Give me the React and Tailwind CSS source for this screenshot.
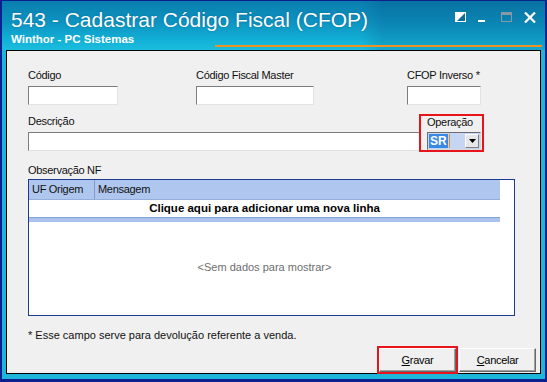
import React from "react";

// sunken win32 edit box
const editBox =
  "h-[19px] bg-white border border-t-[#7d7d7d] border-l-[#7d7d7d] border-r-[#e3e3e3] border-b-[#e3e3e3]";

const Label = ({ children, className = "" }) => (
  <div className={`text-[11px] leading-[14px] tracking-[-0.3px] text-[#111] whitespace-nowrap ${className}`}>{children}</div>
);

const TitleIcons = () => (
  <div className="flex items-start mt-[4px]">
    <div className="w-[23px]">
      <svg width="11" height="10" viewBox="0 0 11 10">
        <rect x="0.5" y="0.5" width="10" height="9" fill="#fff" stroke="#fff" />
        <polygon points="10,1 10,9 2,9" fill="#0b6d97" />
      </svg>
    </div>
    <div className="w-[23px]">
      <svg width="8" height="11" viewBox="0 0 8 11">
        <rect x="0" y="8" width="7" height="2" fill="#fff" />
      </svg>
    </div>
    <div className="w-[23px]">
      <svg width="12" height="10" viewBox="0 0 12 10">
        <rect x="0.5" y="0.5" width="10" height="9" fill="none" stroke="#8a98a4" />
        <rect x="0" y="0" width="11" height="3" fill="#8a98a4" />
      </svg>
    </div>
    <div className="w-[12px]">
      <svg width="12" height="11" viewBox="0 0 12 11">
        <path d="M1 0.5 L11 10.5 M11 0.5 L1 10.5" stroke="#fff" strokeWidth="2.2" />
      </svg>
    </div>
  </div>
);

const Button = ({ children, className = "" }) => (
  <div
    className={`w-[77px] h-[24px] flex items-center justify-center text-[11px] tracking-[-0.3px] text-black bg-[#f0f0f0] border border-t-white border-l-white border-r-[#696969] border-b-[#696969] shadow-[inset_-1px_-1px_0_#a0a0a0] ${className}`}
  >
    {children}
  </div>
);

export default function App() {
  return (
    <div className="w-[547px] h-[382px] bg-[#0c2090] pt-[1px] px-[2px] pb-[3px] font-['Liberation_Sans',Arial,sans-serif]">
      <div className="h-full flex flex-col bg-[#1db6d8]">
        {/* title bar */}
        <div className="pl-[9px] pr-[9px] pt-[7px] pb-[4px] bg-[linear-gradient(90deg,transparent_66%,rgba(0,50,100,0.16)_70%,rgba(0,50,100,0.16)_100%),linear-gradient(180deg,#0a7eae_0%,#0d95c2_45%,#12b0d6_80%,#1bbfdf_100%)]">
          <div className="flex items-start justify-between">
            <div className="text-[21px] leading-[24px] text-white whitespace-nowrap [text-shadow:0_0_2px_rgba(0,40,80,0.4)]">
              543 - Cadastrar Código Fiscal (CFOP)
            </div>
            <TitleIcons />
          </div>
          <div className="flex items-start mt-[1px] h-[13px]">
            <div className="text-[11.5px] leading-[13px] font-bold text-white whitespace-nowrap">Winthor - PC Sistemas</div>
            <div className="ml-[81px] -mr-[6px] mt-[12px] h-[2px] flex-1 bg-[#ea9426]" />
          </div>
        </div>

        {/* client area */}
        <div className="flex-1 flex flex-col px-[4px] pb-[5px]">
          <div className="flex-1 flex flex-col bg-[#f0f0f0] border border-black pl-[21px] pr-[4px] pt-[17px]">
            <div className="flex">
              <div className="w-[168px]">
                <Label>Código</Label>
                <div className={`${editBox} w-[90px] mt-[4px]`} />
              </div>
              <div className="w-[211px]">
                <Label>Código Fiscal Master</Label>
                <div className={`${editBox} w-[118px] mt-[4px]`} />
              </div>
              <div>
                <Label>CFOP Inverso *</Label>
                <div className={`${editBox} w-[74px] mt-[4px]`} />
              </div>
            </div>

            <div className="flex mt-[9px]">
              <div className="w-[392px]">
                <Label>Descrição</Label>
                <div className={`${editBox} w-[392px] mt-[4px]`} />
              </div>
              <div className="w-[65px] h-[38px] -ml-[1px] border-2 border-[#e8141c] pl-[6px]">
                <div className="text-[11px] leading-[12px] tracking-[-0.3px] text-[#111]">Operação</div>
                <div className="mt-[4px] w-[54px] h-[18px] flex items-start bg-[#c6d5f1] border border-t-[#6d6d6d] border-l-[#6d6d6d] border-r-[#d8d8d8] border-b-[#d8d8d8]">
                  <div className="mt-[1px] ml-[1px] h-[14px] px-[1px] bg-[#3a8ae4] text-white font-bold text-[12px] leading-[14px]">SR</div>
                  <div className="mt-[1px] ml-[1px] w-[1px] h-[14px] bg-[#f08a1c]" />
                  <div className="ml-auto mr-[1px] mt-[1px] w-[14px] h-[14px] flex items-center justify-center bg-[#e6e6e6] border border-t-white border-l-white border-r-[#808080] border-b-[#808080]">
                    <svg width="7" height="4" viewBox="0 0 7 4">
                      <polygon points="0,0 7,0 3.5,4" fill="#000" />
                    </svg>
                  </div>
                </div>
              </div>
            </div>

            <Label className="mt-[11px]">Observação NF</Label>
            <div className="mt-[2px] w-[487px] h-[137px] flex flex-col bg-white border border-[#1d3a8f]">
              <div className="w-[471px] flex flex-col flex-1">
                <div className="h-[20px] flex bg-[#afc7ee] border-b border-b-[#94afdc] text-[11px] tracking-[-0.3px] text-[#111]">
                  <div className="w-[66px] pl-[3px] flex items-center border-r border-r-[#7f9bcc]">UF Origem</div>
                  <div className="pl-[3px] flex items-center">Mensagem</div>
                </div>
                <div className="h-[17px] flex items-center justify-center text-[11.5px] font-bold text-black">
                  Clique aqui para adicionar uma nova linha
                </div>
                <div className="h-[5px] bg-[#a9c3ee] border-t border-t-[#86a3d6]" />
                <div className="flex-1 flex items-center justify-center pb-[2px] text-[11px] text-[#6e6e6e]">
                  &lt;Sem dados para mostrar&gt;
                </div>
              </div>
            </div>

            <div className="mt-[12px] text-[11px] leading-[14px] text-[#111] whitespace-nowrap">
              * Esse campo serve para devolução referente a venda.
            </div>

            <div className="mt-[6px] flex justify-end gap-[3px]">
              <Button className="outline-2 outline-[#e8141c]">
                <span><span className="underline">G</span>ravar</span>
              </Button>
              <Button>
                <span><span className="underline">C</span>ancelar</span>
              </Button>
            </div>
          </div>
        </div>
      </div>
    </div>
  );
}
